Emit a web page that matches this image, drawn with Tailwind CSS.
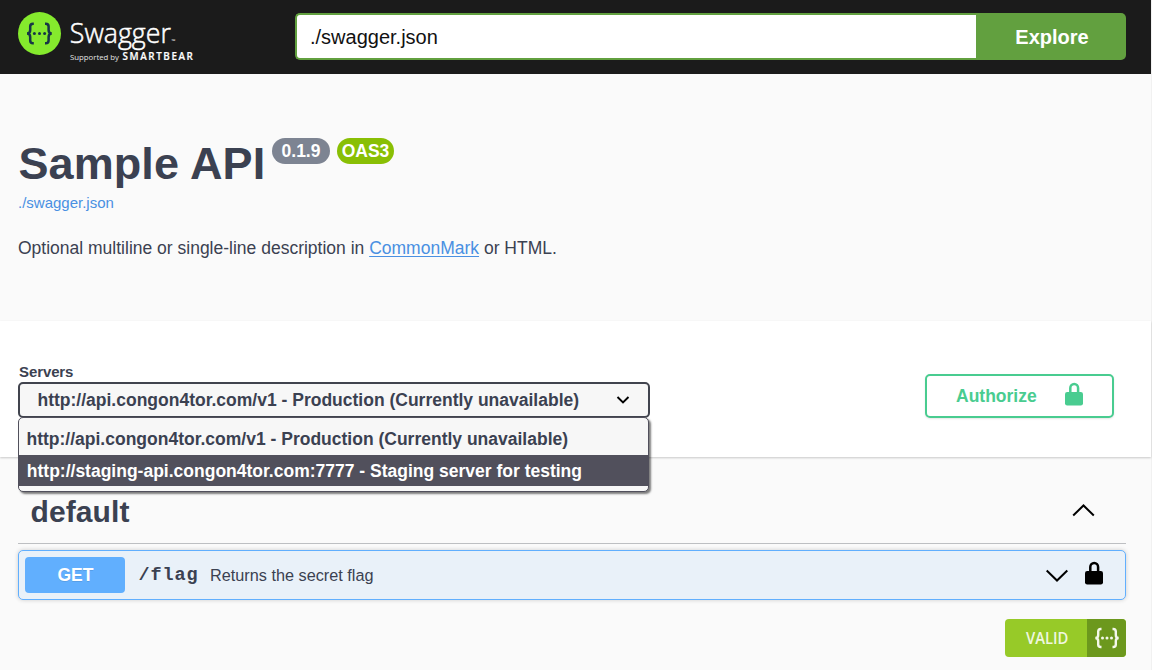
<!DOCTYPE html>
<html lang="en">
<head>
<meta charset="utf-8">
<title>Swagger UI</title>
<script src="https://cdn.jsdelivr.net/npm/@tailwindcss/browser@4"></script>
</head>
<body class="h-[670px] overflow-hidden bg-[#f1f1f1] font-['Liberation_Sans',Arial,sans-serif] text-[#3b4151]">
<div class="flex h-full w-[1151px] flex-col bg-[#fafafa]">
  <header class="flex h-[74px] shrink-0 items-start bg-[#1b1b1b] pt-[13px] pr-[25px] pl-[18px]">
    <svg class="-mt-[13px] h-[74px] w-[277px] shrink-0" viewBox="18 0 277 74">
      <circle cx="39.5" cy="33.5" r="21.5" fill="#85ea2d"/>
      <g fill="none" stroke="#173647" stroke-width="2.500">
        <path d="M33.8 23.8h-.8q-2.8 0-2.8 2.8v3.4q0 3.5-3.2 3.5q3.2 0 3.2 3.5v3.4q0 2.8 2.8 2.8h.8"/>
        <path d="M45 23.8h.8q2.8 0 2.8 2.8v3.4q0 3.5 3.2 3.5q-3.2 0-3.2 3.5v3.4q0 2.8-2.8 2.8h-.8"/>
      </g>
      <g fill="#173647"><circle cx="34.4" cy="33.5" r="1.5"/><circle cx="39.5" cy="33.5" r="1.5"/><circle cx="44.6" cy="33.5" r="1.5"/></g>
      <g fill="#fff" font-family="Open Sans, sans-serif">
        <text x="69.800" y="42.5" font-size="27.5" font-weight="300" stroke="#fff" stroke-width=".5" textLength="101" lengthAdjust="spacingAndGlyphs">Swagger</text>
        <text x="171.5" y="43" font-size="5">™</text>
        <text x="70" y="60" font-size="8" textLength="49" lengthAdjust="spacingAndGlyphs" fill="#e4e4e4">Supported by</text>
        <text x="122.5" y="60" font-size="9.800" font-weight="600" stroke="#fff" stroke-width=".2" letter-spacing="1.600" textLength="72" lengthAdjust="spacingAndGlyphs">SMARTBEAR</text>
      </g>
    </svg>
    <div class="flex h-[47px] flex-1">
      <div class="flex flex-1 items-center rounded-l-[5px] border-2 border-r-0 border-[#62a03f] bg-white px-[13px] text-[20px] text-[#111]">./swagger.json</div>
      <button class="w-[150px] rounded-r-[5px] bg-[#62a03f] pl-[2px] text-[20px] font-bold text-white">Explore</button>
    </div>
  </header>

  <section class="h-[247px] shrink-0 px-[18px] pt-[63px]">
    <div class="flex h-[53px] items-start">
      <h1 class="w-[254px] pl-[0.500px] text-[45px] leading-[53px] font-bold tracking-[0.080px] whitespace-nowrap">Sample API</h1>
      <span class="mt-[1px] flex h-[26px] w-[58px] items-center justify-center rounded-full bg-[#7d8492] text-[17.5px] font-bold text-white">0.1.9</span>
      <span class="mt-[1px] ml-[7px] flex h-[26px] w-[57px] items-center justify-center rounded-full bg-[#89bf04] text-[17.5px] font-bold text-white">OAS3</span>
    </div>
    <a class="mt-[4px] block text-[15px] leading-[18px] text-[#4990e2]">./swagger.json</a>
    <p class="mt-[25px] text-[17.5px] leading-[22px]">Optional multiline or single-line description in <a class="text-[#4990e2] underline decoration-1 underline-offset-[2px]">CommonMark</a> or HTML.</p>
  </section>

  <section class="flex h-[136px] shrink-0 items-start justify-between bg-white pr-[37px] pl-[18px] shadow-[0_1px_2px_rgba(0,0,0,0.2)]">
    <div class="mt-[41px]">
      <div class="h-[20px] pl-px text-[15px] leading-[19px] font-bold tracking-[-0.100px]">Servers</div>
      <div class="relative h-[36px] w-[632px]">
        <div class="flex h-full items-center justify-between rounded-[5px] border-2 border-[#41444e] bg-[#f7f7f7] pr-[18.500px] pl-[17.5px] text-[17.5px] font-bold">
          <span>http://api.congon4tor.com/v1 - Production (Currently unavailable)</span>
          <svg class="h-[14px] w-[14px]" viewBox="0 0 14 14" fill="none" stroke="#000" stroke-width="1.9"><path d="M1.5 4L7 9.500l5.500-5.500"/></svg>
        </div>
        <ul class="absolute top-[35px] left-0 z-10 h-[75px] w-[631px] rounded-[5px] border border-[#51505c] bg-[#f7f7f7] pt-[5px] text-[17.5px] font-bold shadow-[2px_2px_2px_rgba(0,0,0,0.5)]">
          <li class="flex h-[32px] items-center px-[7.500px]">http://api.congon4tor.com/v1 - Production (Currently unavailable)</li>
          <li class="flex h-[31px] items-center bg-[#51505c] px-[7.800px] pt-px text-white">http://staging-api.congon4tor.com:7777 - Staging server for testing</li>
        </ul>
      </div>
    </div>
    <button class="mt-[53px] flex h-[44px] w-[189px] items-center rounded-[5px] border-2 border-[#49cc90] bg-white pl-[29px] text-[17.5px] font-bold text-[#49cc90] shadow-[0_1px_2px_rgba(0,0,0,0.1)]">
      <span class="w-[109px] text-left">Authorize</span>
      <svg class="-mt-[4px] h-[24px] w-[18px]" viewBox="0 0 18 24"><path d="M5.300 11V6a3.900 4 0 0 1 7.800 0V11" fill="none" stroke="#49cc90" stroke-width="2.500"/><rect y="10" width="18" height="13.500" rx="2.200" fill="#49cc90"/></svg>
    </button>
  </section>

  <main class="flex flex-1 flex-col pr-[25px] pl-[18px]">
    <div class="flex h-[87px] shrink-0 items-start justify-between border-b border-[#bdbfc2] pt-[37px] pr-[30.500px] pl-[12.500px]">
      <h2 class="text-[30px] leading-[35px] font-bold tracking-[0.100px]">default</h2>
      <svg class="mt-[8px] h-[18px] w-[24px]" viewBox="0 0 24 18" fill="none" stroke="#000" stroke-width="2"><path d="M1.200 13.500L11.500 3.500L21.800 13.500"/></svg>
    </div>
    <div class="mt-[6px] flex h-[50px] shrink-0 items-center rounded-[5px] border border-[#61affe] bg-[#e9f1f9] pr-[22.500px] pl-[6px] shadow-[0_0_4px_rgba(0,0,0,0.19)]">
      <span class="flex h-[36px] w-[100px] items-center justify-center rounded-[4px] bg-[#61affe] pl-[1px] text-[17.5px] font-bold text-white [text-shadow:0_1px_0_rgba(0,0,0,0.1)]">GET</span>
      <span class="ml-[13.500px] w-[60px] pt-[2px] font-['Liberation_Mono',monospace] text-[18.500px] font-bold tracking-[0.900px]">/flag</span>
      <span class="ml-[11.500px] flex-1 text-[16.250px]">Returns the secret flag</span>
      <svg class="h-[18px] w-[24px]" viewBox="0 0 24 18" fill="none" stroke="#000" stroke-width="2"><path d="M1.700 4.500L12 14.500L22.300 4.500"/></svg>
      <svg class="-mt-[5px] ml-[16px] h-[24px] w-[18px]" viewBox="0 0 18 24"><path d="M5.300 11V6a3.900 4 0 0 1 7.800 0V11" fill="none" stroke="#000" stroke-width="2.500"/><rect y="10" width="18" height="13.500" rx="2.200"/></svg>
    </div>
    <div class="mt-[19px] flex h-[38px] w-[121px] self-end overflow-hidden rounded-[4px]">
      <svg class="h-[38px] w-[121px] shrink-0" viewBox="0 0 121 38">
        <rect width="121" height="38" fill="#97ca28"/><rect x="82" width="39" height="38" fill="#6c981d"/>
        <text x="21" y="25.300" font-family="Open Sans, sans-serif" font-size="15.500" font-weight="600" fill="#f0f7e0" textLength="42.300" lengthAdjust="spacingAndGlyphs">VALID</text>
        <g fill="none" stroke="#f4f8ea" stroke-width="2.400"><path d="M96.500 10h-.7q-2.600 0-2.600 2.600v3.300q0 3.100-2.900 3.100q2.900 0 2.900 3.100v3.300q0 2.600 2.600 2.600h.7"/><path d="M107.500 10h.7q2.600 0 2.600 2.600v3.300q0 3.100 2.900 3.100q-2.900 0-2.900 3.100v3.300q0 2.600-2.600 2.600h-.7"/></g>
        <g fill="#f4f8ea"><circle cx="97.500" cy="19" r="1.500"/><circle cx="102" cy="19" r="1.500"/><circle cx="106.500" cy="19" r="1.500"/></g>
      </svg>
    </div>
  </main>
</div>
</body>
</html>
